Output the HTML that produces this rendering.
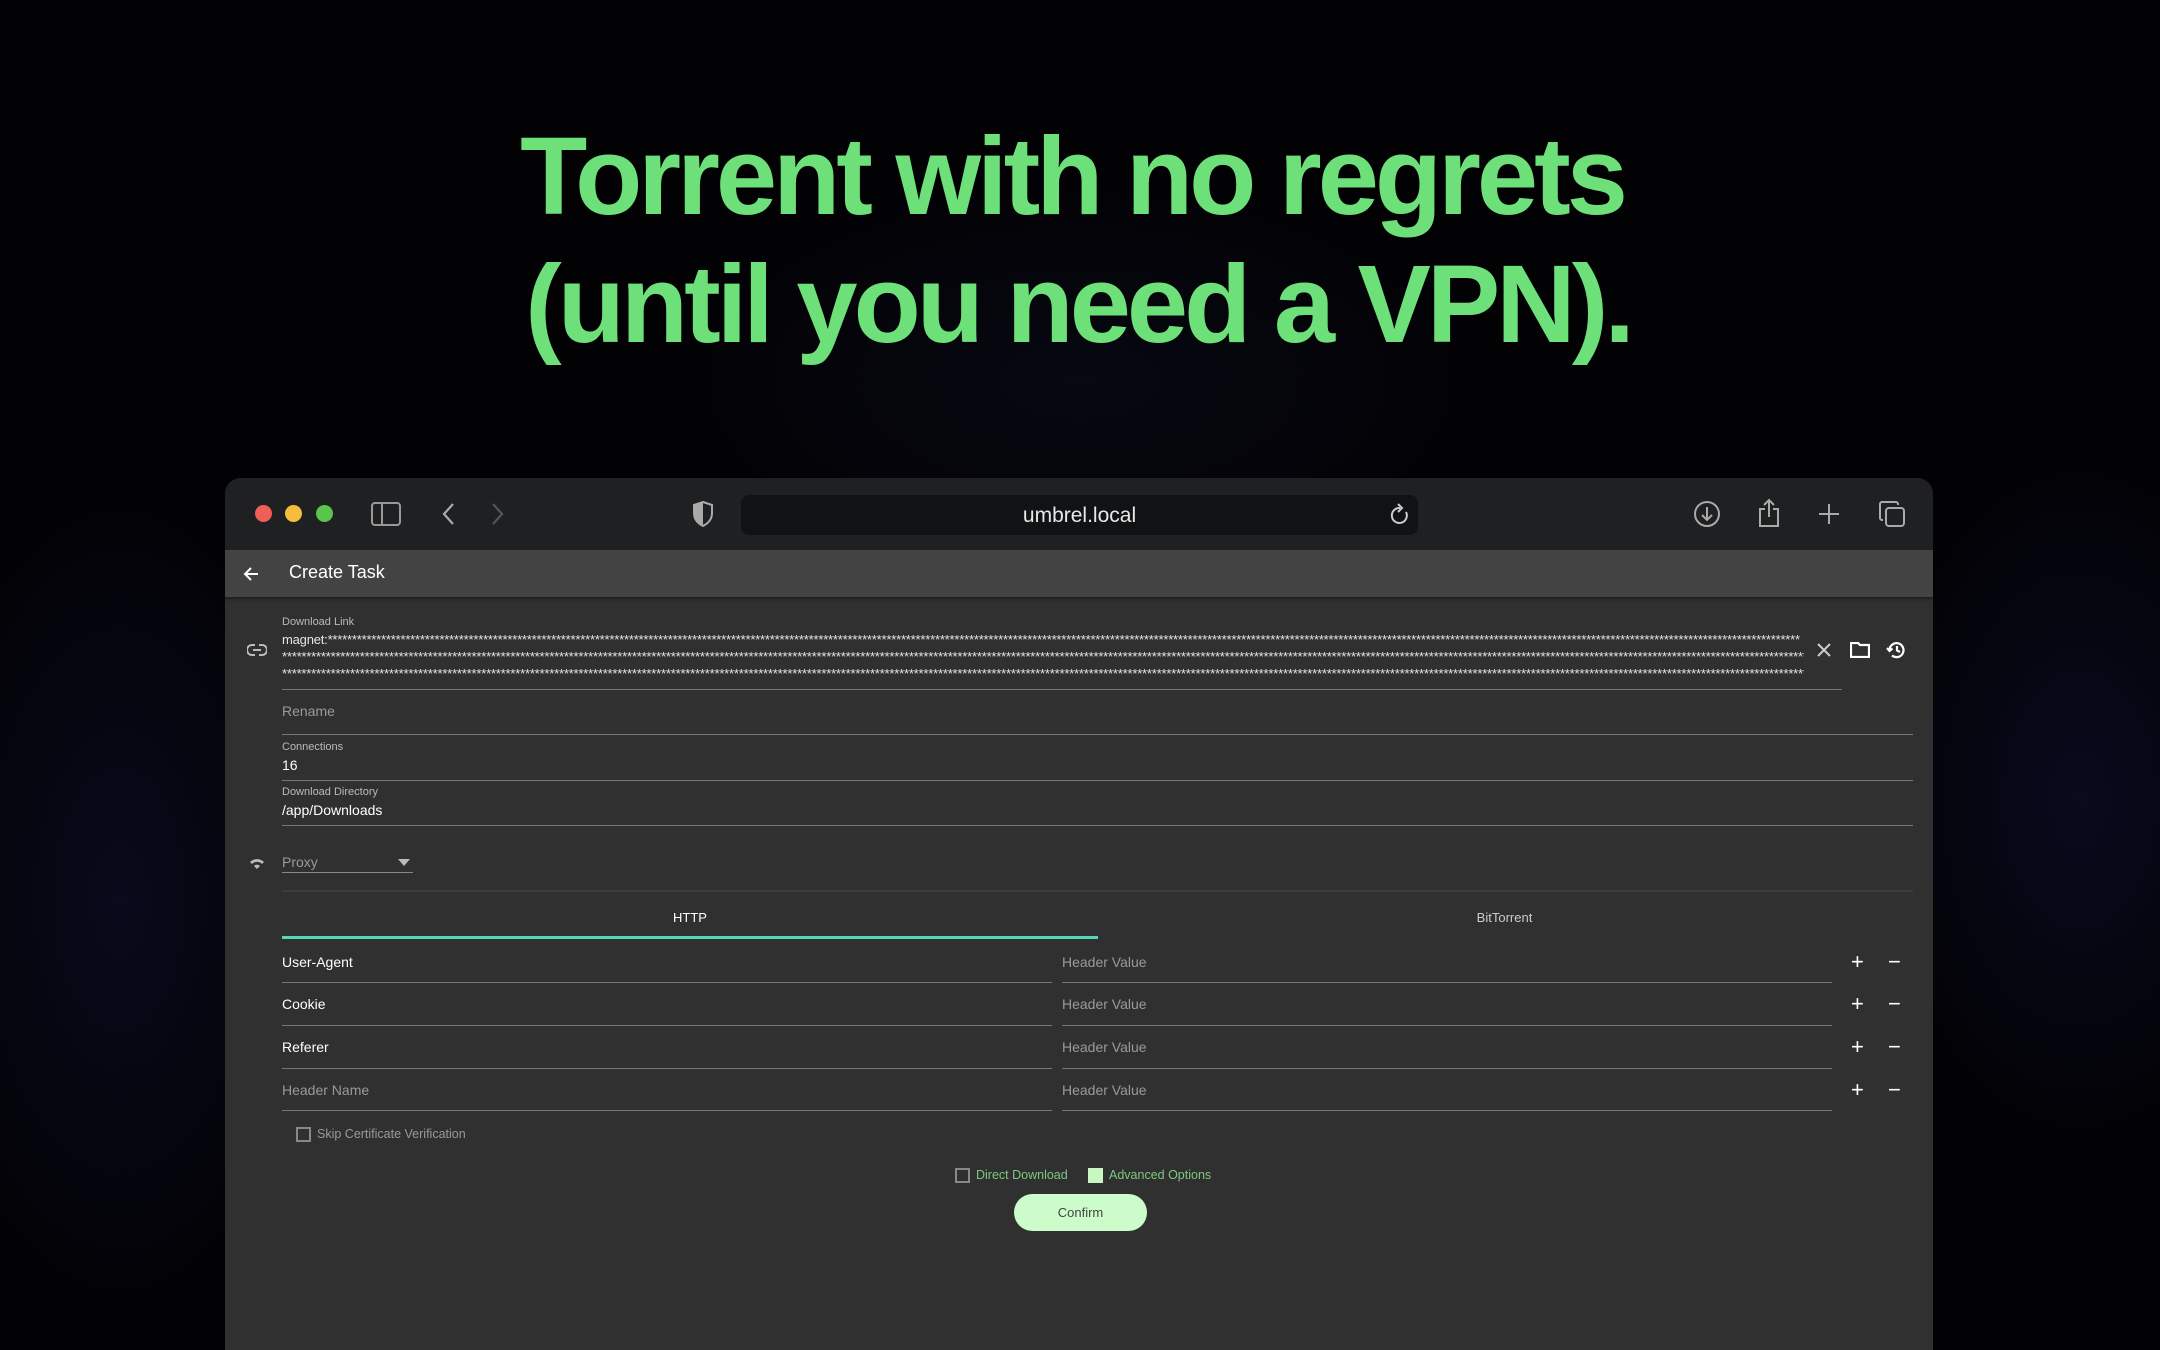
<!DOCTYPE html>
<html><head><meta charset="utf-8"><style>
*{margin:0;padding:0;box-sizing:border-box}
html,body{width:2160px;height:1350px;overflow:hidden;background:#000;font-family:"Liberation Sans",sans-serif}
.bg{position:absolute;inset:0;background:
radial-gradient(ellipse 300px 600px at 120px 900px,rgba(40,40,120,.2),transparent 70%),
radial-gradient(ellipse 300px 500px at 2080px 800px,rgba(40,40,130,.2),transparent 70%),
radial-gradient(ellipse 600px 300px at 1080px 380px,rgba(30,30,70,.2),transparent 70%),#020205}
.t{position:absolute;left:0;width:2160px;text-align:center;color:#6ee07a;font-weight:bold;font-size:110px;letter-spacing:-4px;white-space:nowrap}
.win{position:absolute;left:225px;top:478px;width:1708px;height:872px;border-radius:16px 16px 0 0;overflow:hidden;background:#303030}
.tb{position:absolute;left:0;top:0;width:100%;height:72px;background:#1f2022}
.ab{position:absolute;left:0;top:72px;width:100%;height:47px;background:#434343;box-shadow:0 2px 3px rgba(0,0,0,.4)}
.a{position:absolute;white-space:nowrap}
.dot{position:absolute;width:17px;height:17px;border-radius:50%;top:27px}
.lbl{font-size:11px;color:#bbb}
.val{font-size:14px;color:#fff}
.ph{font-size:14px;color:#9a9a9a}
.ln{position:absolute;height:1px;background:#777}
.star{position:absolute;left:57px;font-size:13px;color:#e6e6e6;overflow:hidden;white-space:nowrap;letter-spacing:-0.2px;height:16px;line-height:16px}
.pm{position:absolute;color:#fff;font-size:22px;line-height:22px}
</style></head><body>
<div class="bg"></div>
<div class="t" style="top:113px;left:-8px">Torrent with no regrets</div>
<div class="t" style="top:241px;left:-2px">(until you need a VPN).</div>

<div class="win">
 <div class="tb">
  <div class="dot" style="left:30px;background:#ed5f57"></div>
  <div class="dot" style="left:60px;background:#f5bd3b"></div>
  <div class="dot" style="left:91px;background:#5ac54c"></div>
  <svg class="a" style="left:146px;top:24px" width="30" height="24" viewBox="0 0 30 24" fill="none" stroke="#999" stroke-width="2"><rect x="1" y="1" width="28" height="22" rx="3"/><line x1="11" y1="1" x2="11" y2="23"/></svg>
  <svg class="a" style="left:216px;top:24px" width="16" height="24" viewBox="0 0 16 24" fill="none" stroke="#aaa" stroke-width="2.2"><path d="M12 2 L3 12 L12 22"/></svg>
  <svg class="a" style="left:264px;top:24px" width="16" height="24" viewBox="0 0 16 24" fill="none" stroke="#555" stroke-width="2.2"><path d="M4 2 L13 12 L4 22"/></svg>
  <svg class="a" style="left:467px;top:23px" width="22" height="26" viewBox="0 0 22 26"><path d="M11 1 L20 4 V12 C20 19 15 23 11 25 C7 23 2 19 2 12 V4 Z" fill="none" stroke="#aaa" stroke-width="2"/><path d="M11 1 L2 4 V12 C2 19 7 23 11 25 Z" fill="#aaa"/></svg>
  <div class="a" style="left:516px;top:17px;width:677px;height:40px;border-radius:8px;background:#111214"></div>
  <div class="a" style="left:516px;top:18px;width:677px;height:40px;line-height:40px;text-align:center;color:#e8e8e8;font-size:21px">umbrel.local</div>
  <svg class="a" style="left:1164px;top:25px" width="22" height="24" viewBox="0 0 22 24" fill="none" stroke="#ccc" stroke-width="2"><path d="M17 9 A7.5 7.5 0 1 1 11 5"/><path d="M9 1 L13 5 L9 9"/></svg>
  <svg class="a" style="left:1468px;top:22px" width="28" height="28" viewBox="0 0 28 28" fill="none" stroke="#aaa" stroke-width="2"><circle cx="14" cy="14" r="12"/><path d="M14 7 V20 M9 15 L14 20 L19 15"/></svg>
  <svg class="a" style="left:1531px;top:20px" width="26" height="30" viewBox="0 0 26 30" fill="none" stroke="#aaa" stroke-width="2"><path d="M9 11 H4 V28 H22 V11 H17"/><path d="M13 2 V19 M8 7 L13 2 L18 7"/></svg>
  <svg class="a" style="left:1592px;top:24px" width="24" height="24" viewBox="0 0 24 24" stroke="#aaa" stroke-width="2"><path d="M12 2 V22 M2 12 H22"/></svg>
  <svg class="a" style="left:1653px;top:22px" width="28" height="28" viewBox="0 0 28 28" fill="none" stroke="#aaa" stroke-width="2"><rect x="8" y="8" width="18" height="18" rx="3"/><path d="M5 20 H4 A2 2 0 0 1 2 18 V4 A2 2 0 0 1 4 2 H18 A2 2 0 0 1 20 4 V5"/></svg>
 </div>
 <div class="ab">
  <svg class="a" style="left:17px;top:15px" width="18" height="18" viewBox="0 0 18 18" fill="none" stroke="#fff" stroke-width="2"><path d="M16 9 H3 M9 3 L3 9 L9 15"/></svg>
  <div class="a" style="left:64px;top:12px;color:#fff;font-size:18px">Create Task</div>
 </div>

 <svg class="a" style="left:22px;top:166px" width="20" height="12" viewBox="0 0 20 12" fill="none" stroke="#bbb" stroke-width="2"><path d="M8 1 H5 A5 5 0 0 0 5 11 H8 M12 1 H15 A5 5 0 0 1 15 11 H12 M6 6 H14"/></svg>
 <div class="a lbl" style="left:57px;top:138px">Download Link</div>
 <div class="star" style="top:154px;width:1518px">magnet:*****************************************************************************************************************************************************************************************************************************************************************************************************************************************************************************************************************************************************************************************************</div>
 <div class="star" style="top:171px;width:1522px">************************************************************************************************************************************************************************************************************************************************************************************************************************************************************************************************************************************************************************************************************************</div>
 <div class="star" style="top:188px;width:1522px">************************************************************************************************************************************************************************************************************************************************************************************************************************************************************************************************************************************************************************************************************************</div>
 <div class="ln" style="left:57px;top:211px;width:1560px"></div>
 <svg class="a" style="left:1591px;top:164px" width="16" height="16" viewBox="0 0 16 16" stroke="#ccc" stroke-width="2"><path d="M2 2 L14 14 M14 2 L2 14"/></svg>
 <svg class="a" style="left:1625px;top:164px" width="20" height="16" viewBox="0 0 20 16" fill="none" stroke="#fff" stroke-width="2.2"><path d="M1 1 H8 L10 3 H19 V15 H1 Z"/></svg>
 <svg class="a" style="left:1661px;top:162px" width="20" height="20" viewBox="0 0 20 20" fill="none" stroke="#fff" stroke-width="2.2"><path d="M3.5 10 A7 7 0 1 1 6 15.5"/><path d="M1 8 L3.5 11 L6.5 8.5"/><path d="M11 6 V10.5 L14 12"/></svg>

 <div class="a ph" style="left:57px;top:225px">Rename</div>
 <div class="ln" style="left:57px;top:256px;width:1631px"></div>
 <div class="a lbl" style="left:57px;top:263px">Connections</div>
 <div class="a val" style="left:57px;top:279px">16</div>
 <div class="ln" style="left:57px;top:302px;width:1631px"></div>
 <div class="a lbl" style="left:57px;top:308px">Download Directory</div>
 <div class="a val" style="left:57px;top:324px">/app/Downloads</div>
 <div class="ln" style="left:57px;top:347px;width:1631px"></div>

 <svg class="a" style="left:24px;top:380px" width="16" height="12" viewBox="0 0 16 12"><path d="M1 4 A10 10 0 0 1 15 4 L13 6 A7 7 0 0 0 3 6 Z" fill="#bbb"/><path d="M5 8 A4 4 0 0 1 11 8 L8 11 Z" fill="#bbb"/></svg>
 <div class="a ph" style="left:57px;top:376px">Proxy</div>
 <svg class="a" style="left:173px;top:381px" width="12" height="7"><path d="M0 0 H12 L6 7 Z" fill="#bbb"/></svg>
 <div class="ln" style="left:57px;top:394px;width:131px;background:#888"></div>
 <div class="ln" style="left:57px;top:412px;width:1631px;background:#3c3c3c;height:2px"></div>

 <div class="a" style="left:57px;top:432px;width:816px;text-align:center;color:#fff;font-size:13px">HTTP</div>
 <div class="a" style="left:873px;top:432px;width:813px;text-align:center;color:#ccc;font-size:13px">BitTorrent</div>
 <div class="a" style="left:57px;top:458px;width:816px;height:3px;background:#54d6b8"></div>

 <div class="a val" style="left:57px;top:476px">User-Agent</div>
 <div class="a val" style="left:57px;top:518px">Cookie</div>
 <div class="a val" style="left:57px;top:561px">Referer</div>
 <div class="a ph" style="left:57px;top:604px">Header Name</div>
 <div class="a ph" style="left:837px;top:476px">Header Value</div>
 <div class="a ph" style="left:837px;top:518px">Header Value</div>
 <div class="a ph" style="left:837px;top:561px">Header Value</div>
 <div class="a ph" style="left:837px;top:604px">Header Value</div>
 <div class="ln" style="left:57px;top:504px;width:770px"></div><div class="ln" style="left:837px;top:504px;width:770px"></div>
 <div class="ln" style="left:57px;top:547px;width:770px"></div><div class="ln" style="left:837px;top:547px;width:770px"></div>
 <div class="ln" style="left:57px;top:590px;width:770px"></div><div class="ln" style="left:837px;top:590px;width:770px"></div>
 <div class="ln" style="left:57px;top:632px;width:770px"></div><div class="ln" style="left:837px;top:632px;width:770px"></div>
 <div class="pm" style="left:1626px;top:473px">+</div><div class="pm" style="left:1663px;top:473px">−</div>
 <div class="pm" style="left:1626px;top:515px">+</div><div class="pm" style="left:1663px;top:515px">−</div>
 <div class="pm" style="left:1626px;top:558px">+</div><div class="pm" style="left:1663px;top:558px">−</div>
 <div class="pm" style="left:1626px;top:601px">+</div><div class="pm" style="left:1663px;top:601px">−</div>

 <div class="a" style="left:71px;top:649px;width:15px;height:15px;border:2px solid #888"></div>
 <div class="a" style="left:92px;top:649px;font-size:12.5px;color:#999">Skip Certificate Verification</div>

 <div class="a" style="left:730px;top:690px;width:15px;height:15px;border:2px solid #888"></div>
 <div class="a" style="left:751px;top:690px;font-size:12.5px;color:#7ec87e">Direct Download</div>
 <div class="a" style="left:863px;top:690px;width:15px;height:15px;background:#c9f7c4"></div>
 <div class="a" style="left:884px;top:690px;font-size:12.5px;color:#7ec87e">Advanced Options</div>
 <div class="a" style="left:789px;top:716px;width:133px;height:37px;border-radius:19px;background:#ccfcc9;text-align:center;line-height:37px;font-size:13px;color:#444">Confirm</div>
</div>
</body></html>
